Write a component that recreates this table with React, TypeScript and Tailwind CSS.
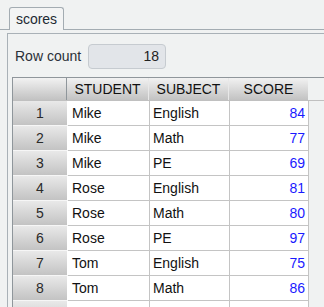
import React from 'react';

const rows = [
  { student: 'Mike', subject: 'English', score: 84 },
  { student: 'Mike', subject: 'Math', score: 77 },
  { student: 'Mike', subject: 'PE', score: 69 },
  { student: 'Rose', subject: 'English', score: 81 },
  { student: 'Rose', subject: 'Math', score: 80 },
  { student: 'Rose', subject: 'PE', score: 97 },
  { student: 'Tom', subject: 'English', score: 75 },
  { student: 'Tom', subject: 'Math', score: 86 },
];

const headGrad = 'bg-gradient-to-b from-[#f2f2f2] to-[#c2c2c2]';
const rowHead = 'bg-gradient-to-b from-[#e9e9e9] to-[#c3c3c3]';
const cell = 'bg-white border-r border-b border-[#c4c4c4] flex items-center';

export default function App() {
  return (
    <div className="w-[324px] h-[307px] overflow-hidden bg-[#f0f2f2] text-[14px] text-[#111] font-['Liberation_Sans',Arial,sans-serif]">
      {/* Tab strip */}
      <div className="h-[30px] pt-[7px] pl-[9px] border-b border-[#a3acb2] flex items-end">
        <div className="h-[23px] w-[55px] -mb-px border border-b-0 border-[#a3acb2] rounded-t-[3px] bg-[#f3f4f4] flex items-center justify-center text-[#1d2a33]">
          scores
        </div>
      </div>

      {/* Panel */}
      <div className="ml-[7px] mt-[3px] border-l border-t border-[#a9b1b7] h-[300px]">
        {/* Row count */}
        <div className="flex items-center mt-[10px] pl-[7px] h-[25px]">
          <span className="text-[#2a3038] w-[73px]">Row count</span>
          <div className="w-[78px] h-[25px] rounded-[4px] border border-[#c6cbd0] bg-[#e2e5e9] flex items-center justify-end pr-[6px] text-[#222]">
            18
          </div>
        </div>

        {/* Grid */}
        <div className="ml-[4px] mt-[8px] border-l border-t border-[#8f969b]">
          {/* Header */}
          <div className="flex h-[23px] border-b border-[#c0c0c0]">
            <div className={`w-[54px] border-r border-[#8f969b] ${headGrad}`} />
            <div className={`w-[82px] border-r border-[#e8e8e8] flex items-center justify-center ${headGrad}`}>STUDENT</div>
            <div className={`w-[80px] border-r border-[#e8e8e8] flex items-center justify-center ${headGrad}`}>SUBJECT</div>
            <div className={`w-[79px] flex items-center justify-center ${headGrad}`}>SCORE</div>
          </div>

          {/* Rows */}
          {rows.map((r, i) => (
            <div key={i} className="flex h-[25px]">
              <div className="w-[55px] pr-px bg-white border-b border-[#f6f6f6]">
                <div className={`h-full flex items-center justify-center text-[#2a2a2a] ${rowHead}`}>
                  {i + 1}
                </div>
              </div>
              <div className={`w-[82px] pl-[4px] ${cell}`}>{r.student}</div>
              <div className={`w-[80px] pl-[3px] ${cell}`}>{r.subject}</div>
              <div className={`w-[79px] justify-end pr-[3px] text-[#1a1aff] ${cell}`}>{r.score}</div>
            </div>
          ))}

          {/* Next row, scrolled below the edge */}
          <div className="flex h-[25px]">
            <div className="w-[55px] pr-px bg-white">
              <div className={`h-full ${rowHead}`} />
            </div>
            <div className={`w-[82px] ${cell}`} />
            <div className={`w-[80px] ${cell}`} />
            <div className={`w-[79px] ${cell}`} />
          </div>
        </div>
      </div>
    </div>
  );
}
